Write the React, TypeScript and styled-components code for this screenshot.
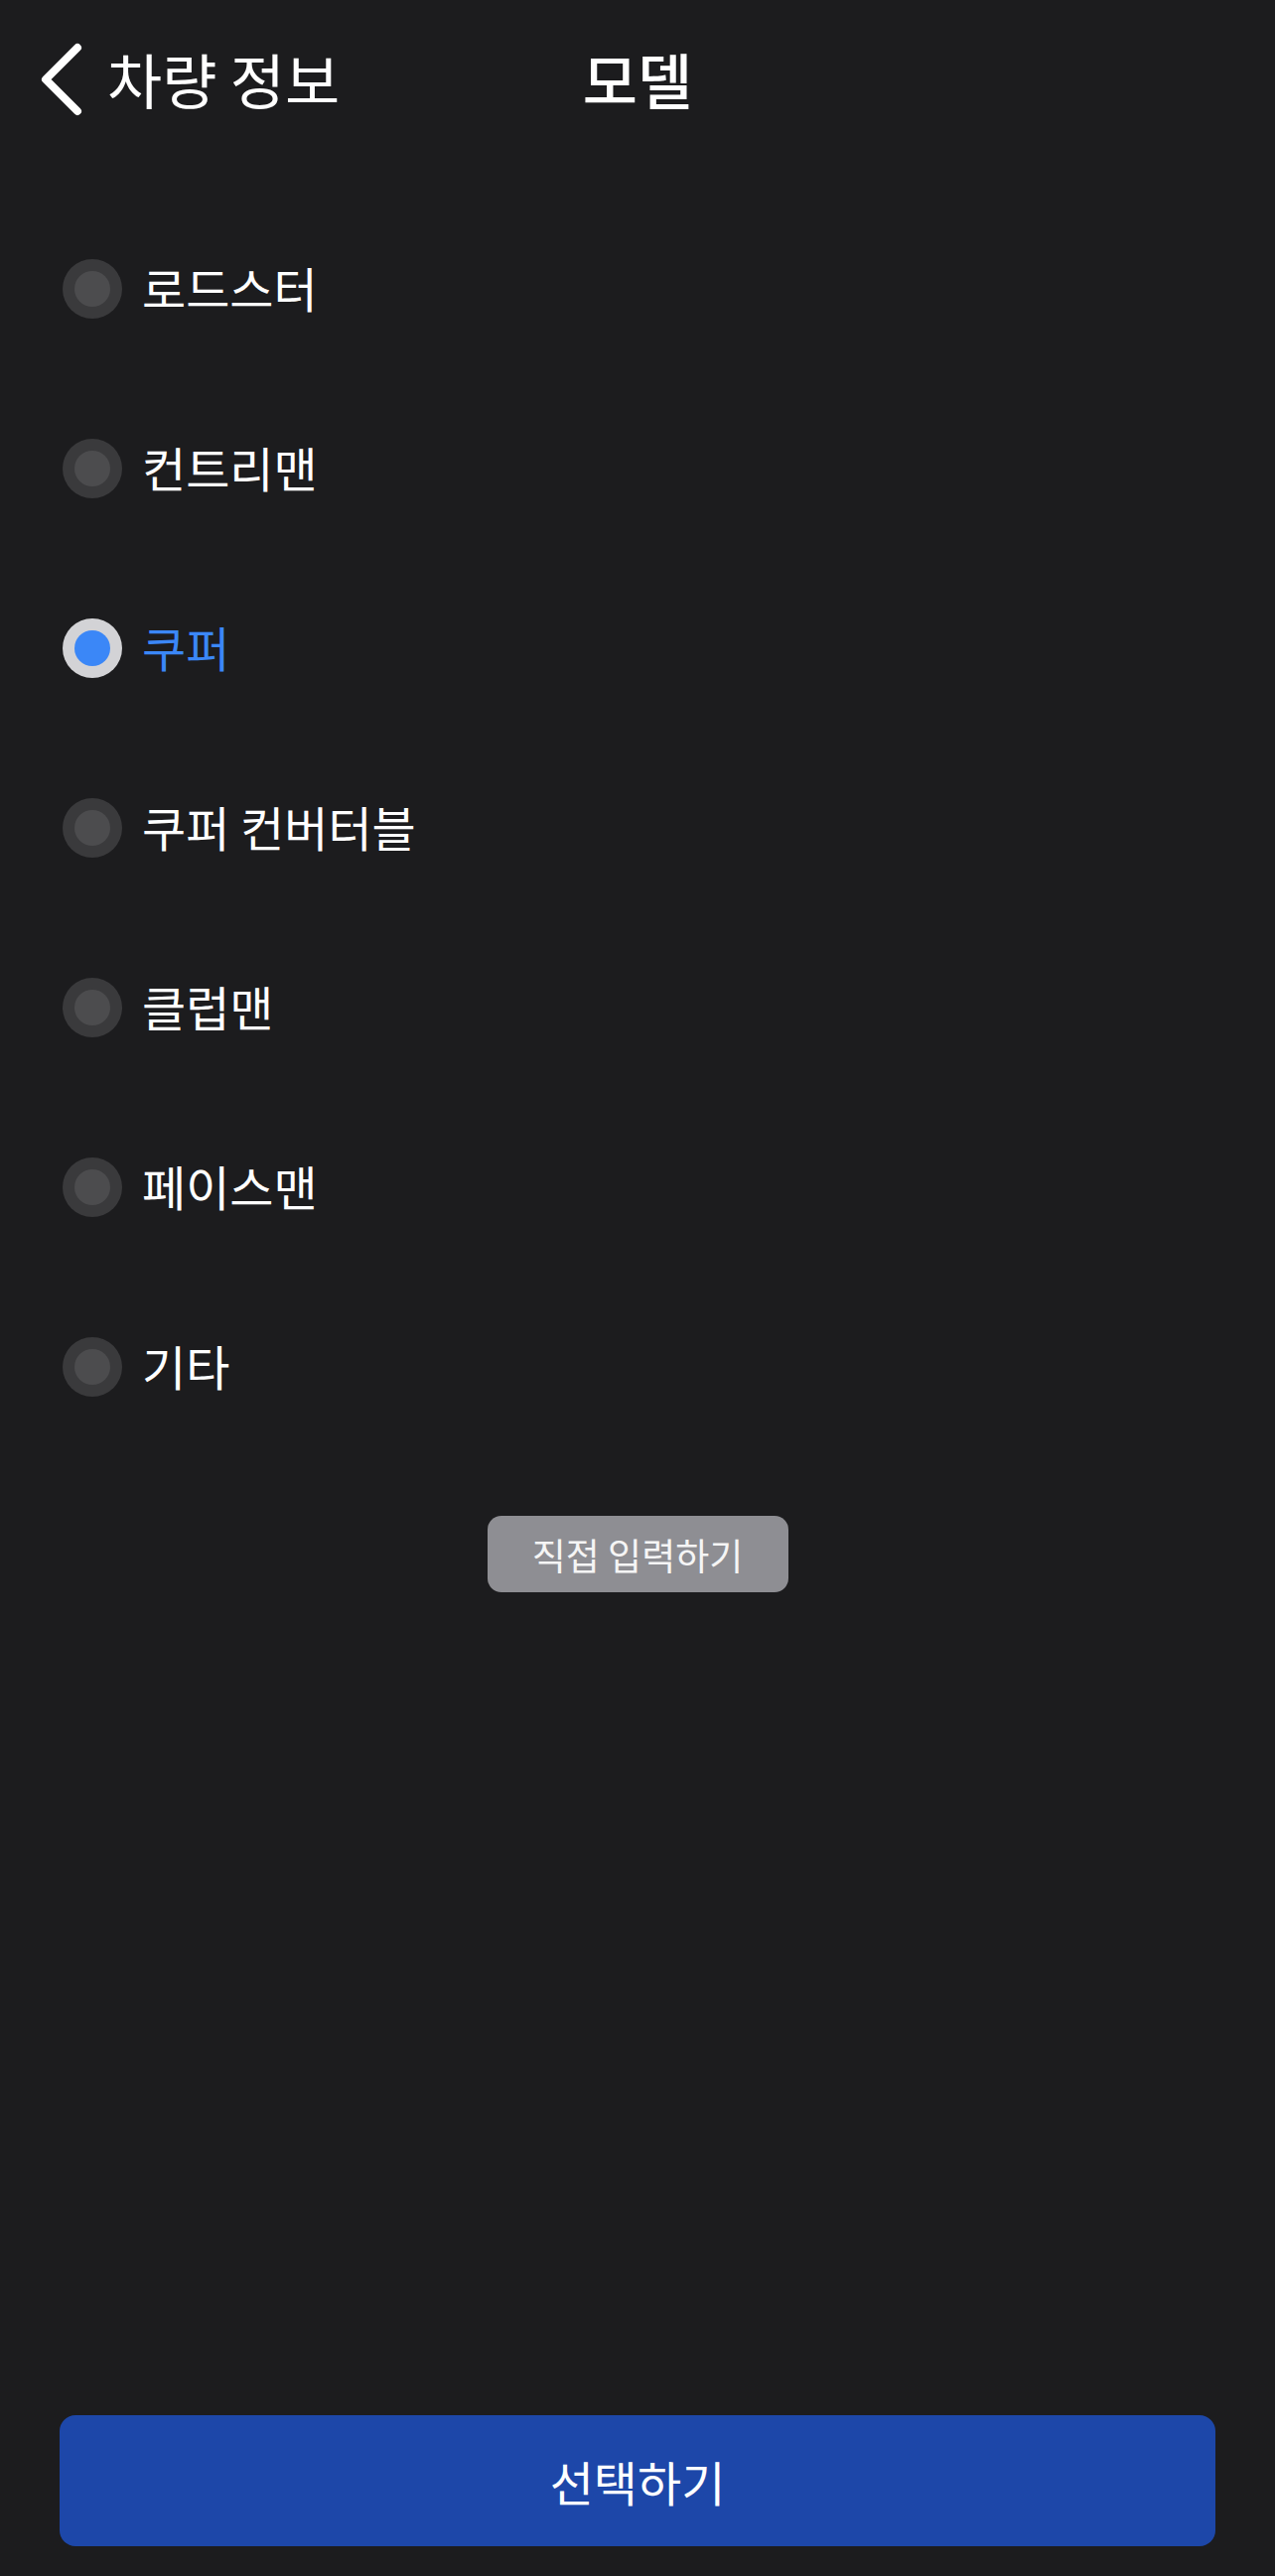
import React, { useState } from 'react';
import styled, { createGlobalStyle } from 'styled-components';

const models = ['로드스터', '컨트리맨', '쿠퍼', '쿠퍼 컨버터블', '클럽맨', '페이스맨', '기타'];

export default function App() {
  const [selected, setSelected] = useState('쿠퍼');

  return (
    <>
      <GlobalStyle />
      <Page>
        <Header>
          <BackButton>
            <svg width="46" height="76" viewBox="0 0 46 76" fill="none">
              <path
                d="M40 6 L8 38 L40 70"
                stroke="#ffffff"
                strokeWidth="8"
                strokeLinecap="round"
                strokeLinejoin="round"
              />
            </svg>
            <BackLabel>차량 정보</BackLabel>
          </BackButton>
          <Title>모델</Title>
          <div></div>
        </Header>

        <List>
          {models.map((name) => (
            <Row key={name} onClick={() => setSelected(name)}>
              <Radio $checked={selected === name}>
                <RadioDot $checked={selected === name} />
              </Radio>
              <Label $checked={selected === name}>{name}</Label>
            </Row>
          ))}
        </List>

        <ManualWrap>
          <ManualButton>직접 입력하기</ManualButton>
        </ManualWrap>

        <SubmitButton>선택하기</SubmitButton>
      </Page>
    </>
  );
}

const GlobalStyle = createGlobalStyle`
  html, body {
    margin: 0;
    padding: 0;
    background: #1c1c1e;
  }
  * {
    box-sizing: border-box;
  }
  body {
    font-family: "Noto Sans CJK KR", "Noto Sans", sans-serif;
    color: #ffffff;
  }
`;

const Page = styled.div`
  display: flex;
  flex-direction: column;
  min-height: 100vh;
  background: #1c1c1e;
`;

const Header = styled.div`
  display: grid;
  grid-template-columns: 1fr auto 1fr;
  align-items: center;
  height: 160px;
  padding: 0 38px;
`;

const BackButton = styled.div`
  display: flex;
  align-items: center;
  gap: 24px;
`;

const BackLabel = styled.div`
  font-size: 60px;
  font-weight: 400;
  line-height: 1;
  margin-top: -2px;
`;

const Title = styled.div`
  font-size: 60px;
  font-weight: 500;
  line-height: 1;
  margin-top: -2px;
`;

const List = styled.div`
  display: flex;
  flex-direction: column;
  padding: 40px 0 0 63px;
`;

const Row = styled.div`
  display: flex;
  align-items: center;
  gap: 20px;
  height: 181px;
  cursor: pointer;
`;

const Radio = styled.div<{ $checked: boolean }>`
  display: flex;
  align-items: center;
  justify-content: center;
  width: 60px;
  height: 60px;
  border-radius: 50%;
  background: ${({ $checked }) => ($checked ? '#d3d3d6' : '#3a3a3c')};
`;

const RadioDot = styled.div<{ $checked: boolean }>`
  width: 36px;
  height: 36px;
  border-radius: 50%;
  background: ${({ $checked }) => ($checked ? '#3b87f7' : '#4c4c4e')};
`;

const Label = styled.div<{ $checked: boolean }>`
  font-size: 48px;
  line-height: 1;
  color: ${({ $checked }) => ($checked ? '#3b87f7' : '#ffffff')};
  margin-top: -4px;
`;

const ManualWrap = styled.div`
  display: flex;
  justify-content: center;
  margin-top: 60px;
`;

const ManualButton = styled.button`
  width: 303px;
  height: 77px;
  border: none;
  border-radius: 14px;
  background: #8e8e93;
  color: #f5f5f5;
  font-family: "Noto Sans CJK KR", "Noto Sans", sans-serif;
  font-size: 37px;
  padding: 0;
`;

const SubmitButton = styled.button`
  margin: auto 60px 30px;
  height: 132px;
  border: none;
  border-radius: 16px;
  background: #1d47a9;
  color: #ffffff;
  font-family: "Noto Sans CJK KR", "Noto Sans", sans-serif;
  font-size: 48px;
  padding: 0;
`;
